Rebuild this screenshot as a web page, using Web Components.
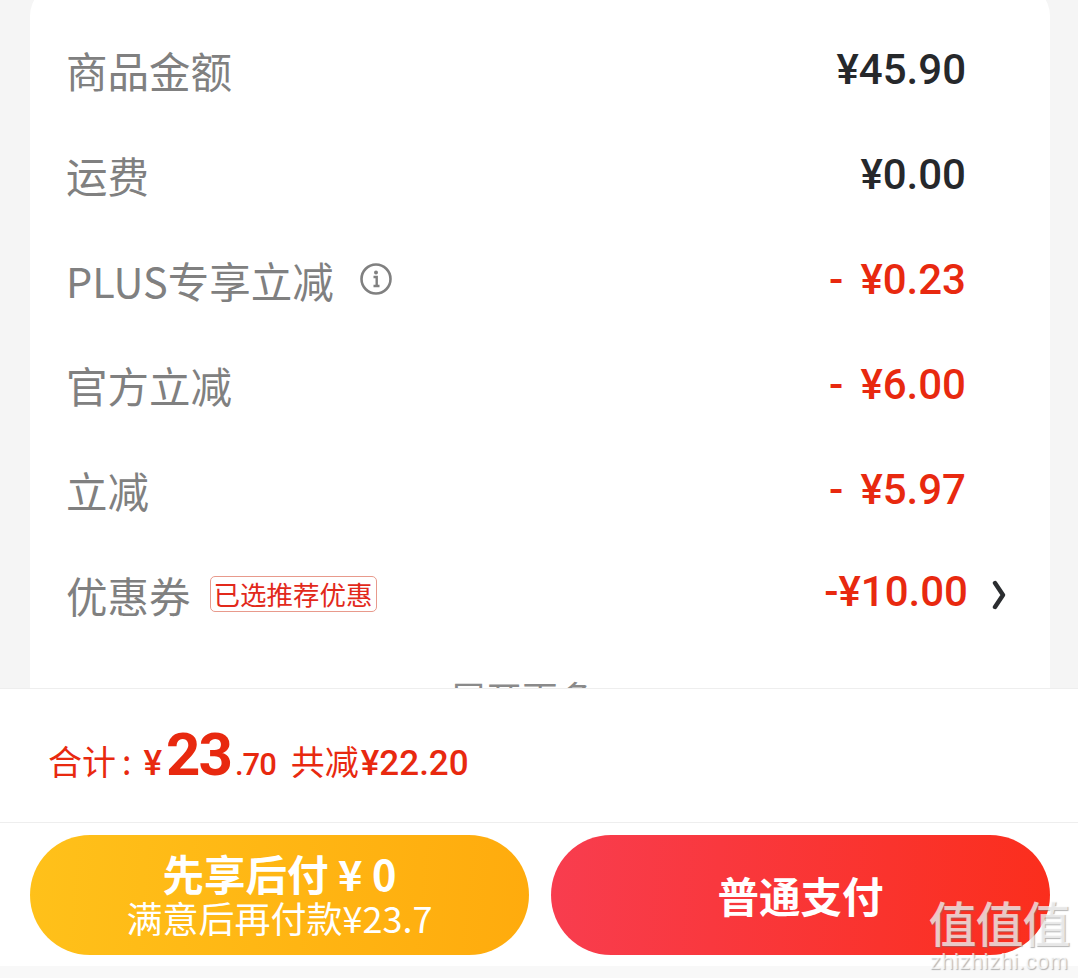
<!DOCTYPE html>
<html>
<head>
<meta charset="utf-8">
<style>
html, body { margin: 0; padding: 0; background: #f8f8f8; }
body { font-family: "Noto Sans CJK SC", "Noto Sans", sans-serif; }
</style>
</head>
<body>
<order-page>
  <price-card>
    <price-row label="商品金额" value="¥45.90"></price-row>
    <price-row label="运费" value="¥0.00"></price-row>
    <price-row label="PLUS专享立减" dash value="¥0.23" info discount></price-row>
    <price-row label="官方立减" dash value="¥6.00" discount></price-row>
    <price-row label="立减" dash value="¥5.97" discount></price-row>
    <price-row label="优惠券" value="-¥10.00" tag="已选推荐优惠" arrow discount></price-row>
  </price-card>
  <pay-bar></pay-bar>
  <site-mark></site-mark>
</order-page>
<script>
class OrderPage extends HTMLElement {
    constructor() {
        super();
        this.attachShadow({ mode: 'open' });
        this.shadowRoot.innerHTML = `
            <style>
                :host {
                    display: flex;
                    flex-direction: column;
                    position: relative;
                    width: 1078px;
                    height: 978px;
                    overflow: hidden;
                    background: #f8f8f8;
                }
                .scroll {
                    height: 688px;
                    overflow: hidden;
                    flex: none;
                    background: #f5f5f5;
                }
            </style>
            <div class="scroll"><slot></slot></div>
            <slot name="bar"></slot>
        `;
    }
    connectedCallback() {
        this.querySelector('pay-bar').slot = 'bar';
    }
}
customElements.define("order-page", OrderPage);

class PriceCard extends HTMLElement {
    constructor() {
        super();
        this.attachShadow({ mode: 'open' });
        this.shadowRoot.innerHTML = `
            <style>
                :host {
                    display: block;
                    margin: -16px 28px 0 30px;
                    padding: 36px 0 0 37px;
                    background: #fff;
                    border-radius: 32px;
                }
                .more {
                    margin-top: 21px;
                    text-align: center;
                    padding-right: 73px;
                    font-size: 36px;
                    line-height: 52px;
                    color: #8a8a8a;
                }
            </style>
            <slot></slot>
            <div class="more">展开更多</div>
        `;
    }
}
customElements.define("price-card", PriceCard);

class PriceRow extends HTMLElement {
    constructor() {
        super();
        this.attachShadow({ mode: 'open' });
        const discount = this.hasAttribute("discount");
        const arrow = this.hasAttribute("arrow");
        const tag = this.getAttribute("tag");
        this.shadowRoot.innerHTML = `
            <style>
                :host {
                    display: flex;
                    align-items: center;
                    height: 105px;
                    padding-right: 84px;
                }
                .label {
                    font-size: 41.5px;
                    font-weight: 400;
                    color: #808080;
                    white-space: nowrap;
                    margin-left: -1px;
                    margin-bottom: 6px;
                }
                .info { margin-left: 25px; margin-bottom: 8px; display: block; }
                .tag {
                    margin-left: 19px;
                    margin-bottom: 8px;
                    height: 34px;
                    padding: 0 3px;
                    border: 1px solid #e89a8c;
                    border-radius: 5px;
                    font-size: 26.5px;
                    line-height: 34px;
                    color: #e2291b;
                    white-space: nowrap;
                }
                .value {
                    margin-left: auto;
                    font-family: Roboto, "Liberation Sans", sans-serif;
                    font-size: 42px;
                    font-weight: 500;
                    color: ${discount ? "#e8290f" : "#26282b"};
                    white-space: pre;
                    margin-bottom: ${arrow ? 12 : 7}px;
                }
                .dash { margin-right: 17px; }
                .arrow { margin: 0 -40px 6px 24px; display: block; }
            </style>
            <span class="label">${this.getAttribute("label")}</span>
            ${this.hasAttribute("info") ? `
            <svg class="info" width="34" height="34" viewBox="0 0 34 34">
                <circle cx="17" cy="17" r="14.5" fill="none" stroke="#808080" stroke-width="2.6"/>
                <circle cx="17" cy="10.5" r="2" fill="#808080"/>
                <path d="M14.5 15h3.2v8.5M14.5 24h6" fill="none" stroke="#808080" stroke-width="2.4"/>
            </svg>` : ""}
            ${tag ? `<span class="tag">${tag}</span>` : ""}
            <span class="value">${this.hasAttribute("dash") ? '<span class="dash">-</span>' : ""}${this.getAttribute("value")}</span>
            ${arrow ? `
            <svg class="arrow" width="14" height="30" viewBox="0 0 14 30">
                <path d="M3 3 L11 15 L3 27" fill="none" stroke="#2b2d30" stroke-width="4.4" stroke-linecap="round" stroke-linejoin="round"/>
            </svg>` : ""}
        `;
    }
}
customElements.define("price-row", PriceRow);

class PayBar extends HTMLElement {
    constructor() {
        super();
        this.attachShadow({ mode: 'open' });
        this.shadowRoot.innerHTML = `
            <style>
                :host {
                    display: block;
                    background: #fff;
                    border-top: 1px solid #eeeeee;
                    padding-bottom: 11px;
                }
                .total {
                    display: flex;
                    align-items: baseline;
                    height: 134px;
                    box-sizing: border-box;
                    padding: 30px 0 0 48px;
                    color: #e8290f;
                    border-bottom: 1px solid #eeeeee;
                    white-space: pre;
                }
                .zh { font-size: 34px; font-weight: 400; }
                .num { font-family: Roboto, "Liberation Sans", sans-serif; font-weight: 500; }
                .big { font-size: 60px; font-weight: 700; letter-spacing: -2px; margin-left: 4px; }
                .buttons {
                    display: flex;
                    justify-content: space-between;
                    padding: 12px 28px 0 30px;
                }
                .btn {
                    display: flex;
                    flex-direction: column;
                    align-items: center;
                    justify-content: center;
                    width: 499px;
                    height: 120px;
                    border-radius: 60px;
                    color: #fff;
                    white-space: pre;
                }
                .later { background: linear-gradient(95deg, #ffc11a, #ffab0d); }
                .normal { background: linear-gradient(95deg, #f83d4f, #fb2e1c); }
                .title { font-size: 41.5px; font-weight: 700; line-height: 44px; }
                .sub { font-size: 36px; font-weight: 400; line-height: 44px; }
            </style>
            <div class="total">
                <span class="zh">合计<span style="margin-left:6px">:</span></span>
                <span class="num" style="font-size:35px;margin-left:12px">¥</span>
                <span class="num big">23</span>
                <span class="num" style="font-size:31px;margin-left:4px;letter-spacing:-1px">.70</span>
                <span class="zh" style="margin-left:15px">共减</span>
                <span class="num" style="font-size:35px;margin-left:2px">¥22.20</span>
            </div>
            <div class="buttons">
                <div class="btn later">
                    <span class="title">先享后付 ¥ 0</span>
                    <span class="sub">满意后再付款¥23.7</span>
                </div>
                <div class="btn normal">
                    <span class="title">普通支付</span>
                </div>
            </div>
        `;
    }
}
customElements.define("pay-bar", PayBar);

class SiteMark extends HTMLElement {
    constructor() {
        super();
        this.attachShadow({ mode: 'open' });
        this.shadowRoot.innerHTML = `
            <style>
                :host {
                    position: absolute;
                    right: 8px;
                    top: 892px;
                    width: 142px;
                    text-align: center;
                    color: rgba(255,255,255,.7);
                    text-shadow: 1px 1px 1px rgba(120,120,120,.55);
                }
                .zh { font-size: 48px; line-height: 58px; font-weight: 500; white-space: nowrap; letter-spacing: -1px; display: block; }
                .en { font-family: "Liberation Sans", sans-serif; font-size: 22px; line-height: 24px; display: block; letter-spacing: 0.5px; }
            </style>
            <span class="zh">值值值</span>
            <span class="en">zhizhizhi.com</span>
        `;
    }
}
customElements.define("site-mark", SiteMark);
</script>
</body>
</html>
